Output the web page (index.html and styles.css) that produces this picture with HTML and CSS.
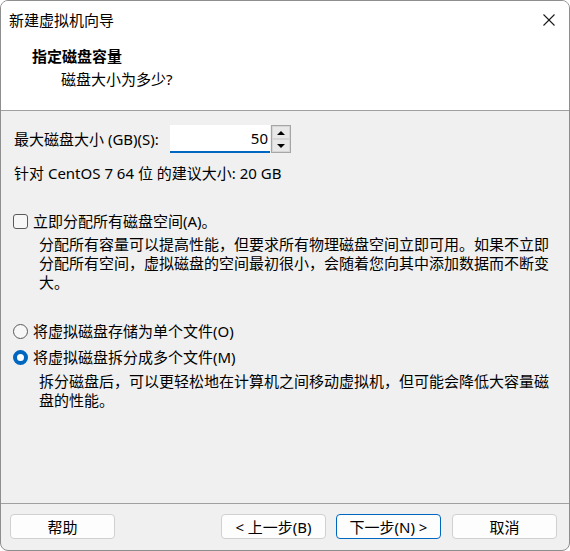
FILE: index.html
```html
<!DOCTYPE html>
<html lang="zh-CN">

<head>
  <meta charset="UTF-8">
  <meta name="viewport" content="width=device-width, initial-scale=1.0">
  <title>新建虚拟机向导</title>
  <link rel="stylesheet" href="styles.css">
</head>

<body>
  <div class="window">
    <div class="titlebar">
      <span class="title">新建虚拟机向导</span>
      <button class="close" aria-label="关闭">
        <svg viewBox="0 0 12 12" fill="none" stroke="currentColor" stroke-width="1.1">
          <path d="M0.5 0.5 11.5 11.5" />
          <path d="M11.5 0.5 0.5 11.5" />
        </svg>
      </button>
    </div>

    <header class="head">
      <h1>指定磁盘容量</h1>
      <p>磁盘大小为多少?</p>
    </header>

    <main class="content">
      <div class="size-row">
        <label for="size">最大磁盘大小 (GB)(S):</label>
        <input id="size" class="field" value="50">
        <div class="spin">
          <button aria-label="增加"><span class="tri up"></span></button>
          <button aria-label="减少"><span class="tri down"></span></button>
        </div>
      </div>

      <p class="hint">针对 CentOS 7 64 位 的建议大小: 20 GB</p>

      <label class="option check-row">
        <span class="box"></span>
        立即分配所有磁盘空间(A)。
      </label>
      <p class="desc">分配所有容量可以提高性能，但要求所有物理磁盘空间立即可用。如果不立即分配所有空间，虚拟磁盘的空间最初很小，会随着您向其中添加数据而不断变大。</p>

      <label class="option radio-row first-radio">
        <span class="radio"></span>
        将虚拟磁盘存储为单个文件(O)
      </label>
      <label class="option radio-row second-radio">
        <span class="radio checked"></span>
        将虚拟磁盘拆分成多个文件(M)
      </label>
      <p class="desc split-desc">拆分磁盘后，可以更轻松地在计算机之间移动虚拟机，但可能会降低大容量磁盘的性能。</p>
    </main>

    <footer class="buttons">
      <button class="btn">帮助</button>
      <span class="spacer"></span>
      <button class="btn">&lt; 上一步(B)</button>
      <button class="btn default next">下一步(N) &gt;</button>
      <button class="btn cancel">取消</button>
    </footer>
  </div>
</body>

</html>
```

FILE: styles.css
```css
* {
  box-sizing: border-box;
}

body {
  margin: 0;
  font-family: "Noto Sans", "Noto Sans CJK SC", sans-serif;
  font-size: 15px;
  color: #000;
  background: #fff;
}

button {
  font: inherit;
  color: inherit;
}

.window {
  width: 570px;
  height: 551px;
  display: flex;
  flex-direction: column;
  border: 1px solid #8e8e8e;
  border-radius: 8px;
  background: #f0f0f0;
  overflow: hidden;
}

.titlebar {
  height: 37px;
  display: flex;
  align-items: center;
  justify-content: space-between;
  padding-left: 8px;
  background: #fff;
}

.title {
  line-height: 20px;
}

.close {
  display: flex;
  align-items: center;
  justify-content: center;
  width: 46px;
  height: 37px;
  padding: 0;
  border: 0;
  background: transparent;
  color: #1a1a1a;
}

.close svg {
  width: 12px;
  height: 12px;
  margin-left: 6px;
}

.head {
  padding: 8px 0 21px 31px;
  background: #fff;
  border-bottom: 1px solid #a0a0a0;
}

.head h1 {
  margin: 0;
  font-size: 15px;
  line-height: 20px;
  font-weight: 700;
}

.head p {
  margin: 3px 0 0 29px;
  line-height: 20px;
}

.content {
  padding: 14px 0 0 12px;
  display: flex;
  flex-direction: column;
  align-items: flex-start;
}

.size-row {
  display: flex;
  align-items: center;
  height: 28px;
}

.size-row label {
  width: 157px;
  padding-left: 1px;
  line-height: 20px;
}

.field {
  width: 100px;
  height: 28px;
  padding: 0 2px 0 4px;
  border: 0;
  border-bottom: 2px solid #0067c0;
  background: #fff;
  font: inherit;
  text-align: right;
  outline: none;
}

.spin {
  display: flex;
  flex-direction: column;
  width: 20px;
  height: 28px;
  margin-left: 1px;
  border: 1px solid #a6a6a6;
}

.spin button {
  flex: 1;
  display: flex;
  align-items: center;
  justify-content: center;
  padding: 0;
  border: 1px solid #d6d6d6;
  background: #e8e8e8;
}

.tri {
  width: 0;
  height: 0;
  border-left: 4px solid transparent;
  border-right: 4px solid transparent;
}

.tri.up {
  border-bottom: 4px solid #000;
}

.tri.down {
  border-top: 4px solid #000;
}

.hint {
  margin: 10px 0 0 1px;
  line-height: 20px;
}

.option {
  display: flex;
  align-items: center;
  gap: 5px;
  line-height: 20px;
}

.check-row {
  margin-top: 28px;
}

.box {
  flex: none;
  width: 15px;
  height: 15px;
  border: 1px solid #5a5a5a;
  border-radius: 3px;
  background: #f7f7f7;
}

.desc {
  max-width: 538px;
  margin: 4px 0 0;
  padding-left: 26px;
  line-height: 19px;
}

.first-radio {
  margin-top: 29px;
}

.second-radio {
  margin-top: 6px;
}

.radio {
  flex: none;
  width: 15px;
  height: 15px;
  border: 1px solid #5a5a5a;
  border-radius: 50%;
  background: #f7f7f7;
}

.radio.checked {
  border: 4.5px solid #0067c0;
  background: #fff;
}

.split-desc {
  margin-top: 5px;
}

.buttons {
  margin-top: auto;
  display: flex;
  align-items: center;
  padding: 10px 12px 11px 9px;
  border-top: 1px solid #a0a0a0;
}

.spacer {
  flex: 1;
}

.btn {
  width: 105px;
  height: 25px;
  padding: 0;
  line-height: 22px;
  border: 1px solid #d0d0d0;
  border-radius: 4px;
  background: #fdfdfd;
}

.btn.default {
  border-color: #0067c0;
}

.next {
  margin-left: 10px;
}

.cancel {
  margin-left: 11px;
}
```
